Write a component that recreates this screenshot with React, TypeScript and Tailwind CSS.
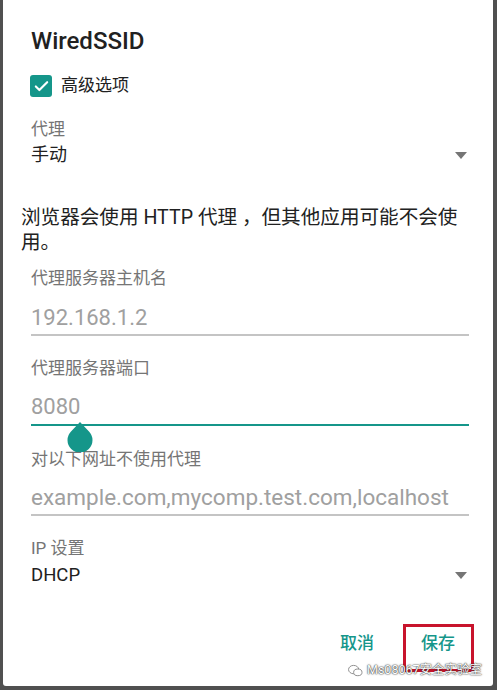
import { Check } from "lucide-react";

const font = "font-['Roboto','Noto_Sans_CJK_SC',sans-serif]";

function Arrow() {
  return (
    <svg width="12" height="7" viewBox="0 0 12 7" className="shrink-0">
      <path d="M0 0 L12 0 L6 7 Z" fill="#757575" />
    </svg>
  );
}

function Label({ children, mt }: { children: React.ReactNode; mt: string }) {
  return <div className={`${mt} h-[20px] text-[17px] leading-[20px] text-[#757575]`}>{children}</div>;
}

export default function App() {
  return (
    <div className={`${font} h-[690px] w-[497px] bg-[#505050] pb-[4px] pl-[3px] pr-[4px]`}>
      <div className="relative h-full rounded-b-[3px] bg-white pl-[28px] pr-[24px]">
        <div className="mt-0 pt-[26px] text-[24px] font-medium leading-[30px] text-[#212121]">WiredSSID</div>

        <div className="mt-[18px] flex h-[24px] items-center gap-[9px]">
          <div className="-ml-[1px] flex h-[22px] w-[22px] items-center justify-center rounded-[3px] bg-[#15968a]">
            <Check size={17} strokeWidth={3} color="white" />
          </div>
          <span className="text-[17px] text-[#212121]">高级选项</span>
        </div>

        <Label mt="mt-[21px]">代理</Label>
        <div className="mt-[4px] flex h-[24px] items-center justify-between pr-[2px]">
          <span className="text-[18px] leading-[24px] text-[#212121]">手动</span>
          <Arrow />
        </div>

        <p className="-ml-[10px] mt-[38px] w-[450px] text-[19.6px] leading-[25px] text-[#212121]">
          浏览器会使用 HTTP 代理 ，但其他应用可能不会使用。
        </p>

        <Label mt="mt-[13px]">代理服务器主机名</Label>
        <div className="mt-[18px] h-[24px] text-[22px] leading-[24px] text-[#a0a0a0]">192.168.1.2</div>
        <div className="mt-[4px] h-[2px] bg-[#c4c4c4]" />

        <Label mt="mt-[22px]">代理服务器端口</Label>
        <div className="mt-[17px] h-[24px] text-[22px] leading-[24px] text-[#a0a0a0]">8080</div>
        <div className="mt-[5px] h-[2px] bg-[#15968a]" />

        <Label mt="mt-[23px]">对以下网址不使用代理</Label>
        <div className="mt-[16px] h-[24px] whitespace-nowrap text-[22.5px] leading-[24px] text-[#a0a0a0]">
          example.com,mycomp.test.com,localhost
        </div>
        <div className="mt-[5px] h-[2px] bg-[#c4c4c4]" />

        <Label mt="mt-[22px]">IP 设置</Label>
        <div className="mt-[5px] flex h-[24px] items-center justify-between pr-[2px]">
          <span className="text-[18.5px] leading-[24px] text-[#212121]">DHCP</span>
          <Arrow />
        </div>

        <div className="mt-[44px] flex h-[24px] items-center justify-end gap-[47px] pr-[14px] text-[17px] font-medium leading-[24px] text-[#15968a]">
          <span>取消</span>
          <span>保存</span>
        </div>

        {/* text cursor handle */}
        <svg width="26" height="30" viewBox="0 0 26 30" className="absolute left-[64px] top-[422px]">
          <path d="M13 0 L22 9.5 A12.5 12.5 0 1 1 4 9.5 Z" fill="#15968a" />
        </svg>

        {/* red highlight box */}
        <div className="absolute left-[400px] top-[624px] h-[48px] w-[71px] border-[3px] border-[#c8142c]" />

        {/* watermark */}
        <div className="absolute left-[345px] top-[662px] flex items-center gap-[4px] whitespace-nowrap text-[12.5px] leading-[16px] text-white [text-shadow:0_0_2px_#333,0_0_1px_#111]">
          <svg width="15" height="13" viewBox="0 0 16 14">
            <ellipse cx="6" cy="6" rx="5.5" ry="4.5" fill="none" stroke="#888" strokeWidth="1" />
            <ellipse cx="10.5" cy="9" rx="4.5" ry="3.6" fill="white" stroke="#888" strokeWidth="1" />
          </svg>
          <span>Ms08067安全实验室</span>
        </div>
      </div>
    </div>
  );
}
